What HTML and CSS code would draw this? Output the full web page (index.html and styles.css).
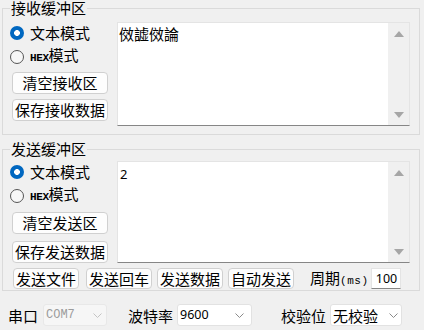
FILE: index.html
```html
<!DOCTYPE html>
<html lang="zh-CN">
<head>
<meta charset="utf-8">
<title>串口助手</title>
<link rel="stylesheet" href="styles.css">
</head>
<body>
<div class="app">
  <fieldset class="group recv">
    <legend>接收缓冲区</legend>
    <div class="group-body">
      <div class="side">
        <div class="radio"><span class="dot on"></span><span>文本模式</span></div>
        <div class="radio"><span class="dot"></span><span><span class="latin">HEX</span>模式</span></div>
        <button class="btn btn-a">清空接收区</button>
        <button class="btn btn-b">保存接收数据</button>
      </div>
      <div class="textbox">
        <div class="text">傚譃傚論</div>
        <div class="scroll"><span class="arr up"></span><span class="arr down"></span></div>
      </div>
    </div>
  </fieldset>
  <fieldset class="group send">
    <legend>发送缓冲区</legend>
    <div class="group-body">
      <div class="side">
        <div class="radio"><span class="dot on"></span><span>文本模式</span></div>
        <div class="radio"><span class="dot"></span><span><span class="latin">HEX</span>模式</span></div>
        <button class="btn btn-a">清空发送区</button>
        <button class="btn btn-b">保存发送数据</button>
      </div>
      <div class="textbox">
        <div class="text num-text">2</div>
        <div class="scroll"><span class="arr up"></span><span class="arr down"></span></div>
      </div>
    </div>
    <div class="actions">
      <button class="btn btn-s btn-first">发送文件</button>
      <button class="btn btn-s">发送回车</button>
      <button class="btn btn-s">发送数据</button>
      <button class="btn btn-s">自动发送</button>
      <span class="period">周期<span class="ms">(ms)</span></span>
      <span class="field">100</span>
    </div>
  </fieldset>
  <div class="status">
    <span class="lbl">串口</span>
    <span class="combo disabled c-port"><span class="mono">COM7</span><svg class="chev" width="9" height="5" viewBox="0 0 9 5"><polyline points="0.5,0.5 4.5,4.5 8.5,0.5"/></svg></span>
    <span class="lbl l-baud">波特率</span>
    <span class="combo c-baud"><span class="digits">9600</span><svg class="chev" width="9" height="5" viewBox="0 0 9 5"><polyline points="0.5,0.5 4.5,4.5 8.5,0.5"/></svg></span>
    <span class="lbl l-parity">校验位</span>
    <span class="combo c-parity"><span>无校验</span><svg class="chev" width="9" height="5" viewBox="0 0 9 5"><polyline points="0.5,0.5 4.5,4.5 8.5,0.5"/></svg></span>
  </div>
</div>
</body>
</html>
```

FILE: styles.css
```css
* { box-sizing: border-box; }
body {
  margin: 0;
  background: #f0f0f0;
  font-family: "Noto Sans CJK SC", "Noto Sans", sans-serif;
  font-size: 15px;
  line-height: 1;
  color: #000;
}
.app {
  width: 420px;
  padding-left: 2px;
}
.group {
  margin: 0;
  padding: 6px 9px 8px 7px;
  border: 1px solid #dadada;
  min-width: 0;
}
.group.send {
  margin-top: 6px;
  padding-top: 4px;
  padding-bottom: 1px;
}
legend {
  padding: 0 1px;
  font-size: 15px;
  line-height: 16px;
}
.group-body {
  display: flex;
}
.side {
  width: 107px;
  display: flex;
  flex-direction: column;
  align-items: flex-start;
}
.radio {
  height: 21px;
  display: flex;
  align-items: center;
  gap: 6px;
  line-height: 21px;
  white-space: nowrap;
}
.radio + .radio { margin-top: 3px; }
.dot {
  width: 14px;
  height: 14px;
  border-radius: 50%;
  border: 1px solid #555;
  background: #f7f7f7;
  flex: none;
}
.dot.on {
  border: none;
  background: radial-gradient(circle, #fff 2.6px, #0067c0 3.2px);
}
.latin {
  font-family: "Liberation Mono", monospace;
  font-weight: bold;
  font-size: 11px;
  letter-spacing: -0.4px;
}
.btn {
  font-family: inherit;
  font-size: 15px;
  line-height: 20px;
  color: #000;
  background: #fdfdfd;
  border: 1px solid #d0d0d0;
  border-radius: 4px;
  padding: 0;
  margin: 0;
  height: 22px;
  width: 96px;
  margin-left: 2px;
  text-align: center;
}
.recv .btn-a { margin-top: 5px; }
.recv .btn-b { margin-top: 5px; }
.send .btn-a { margin-top: 6px; }
.send .btn-b { margin-top: 7px; }
.textbox {
  flex: 1;
  display: flex;
  height: 104px;
  background: #fff;
  border: 1px solid #e4e4e4;
  border-bottom-color: #868686;
}
.send .textbox { height: 102px; }
.text {
  flex: 1;
  padding: 2px 1px;
  line-height: 18px;
}
.num-text {
  font-family: "Noto Sans", sans-serif;
  font-size: 13px;
  padding: 3px 2px;
}
.scroll {
  width: 21px;
  background: #f0f0f0;
  display: flex;
  flex-direction: column;
  justify-content: space-between;
  align-items: center;
  padding: 8px 0 7px;
}
.arr {
  width: 0;
  height: 0;
  border-left: 5px solid transparent;
  border-right: 5px solid transparent;
}
.arr.up { border-bottom: 6px solid #a6a6a6; }
.arr.down { border-top: 6px solid #a6a6a6; }
.actions {
  display: flex;
  align-items: center;
  margin-top: 5px;
  padding-left: 3px;
  gap: 5px;
}
.btn-s {
  width: auto;
  height: 21px;
  line-height: 19px;
  padding: 0 2px;
  margin-left: 0;
}
.btn-first { margin-right: 2px; }
.period {
  margin-left: 11px;
  white-space: nowrap;
}
.ms {
  font-family: "Liberation Mono", monospace;
  font-size: 11px;
  letter-spacing: 0.5px;
}
.field {
  width: 30px;
  height: 21px;
  margin-left: -2px;
  background: #fff;
  border: 1px solid #e4e4e4;
  border-bottom-color: #868686;
  font-family: "Noto Sans", sans-serif;
  font-size: 12.5px;
  line-height: 19px;
  text-align: center;
}
.status {
  display: flex;
  align-items: center;
  height: 22px;
  margin-top: 13px;
  padding-left: 6px;
}
.lbl { white-space: nowrap; }
.combo {
  height: 22px;
  border: 1px solid #e2e2e2;
  border-radius: 3px;
  background: #fff;
  display: flex;
  align-items: center;
  justify-content: space-between;
  padding: 0 5px 0 2px;
  white-space: nowrap;
}
.combo.disabled {
  background: #f6f6f6;
  border-color: #e8e8e8;
  color: #9c9c9c;
}
.c-port { width: 64px; margin-left: 5px; padding-right: 4px; }
.l-baud { margin-left: 21px; }
.c-baud { width: 75px; margin-left: 4px; padding-right: 7px; }
.l-parity { margin-left: 29px; }
.c-parity { width: 72px; margin-left: 4px; padding-right: 3px; }
.mono {
  font-family: "Liberation Mono", monospace;
  font-size: 12px;
}
.digits {
  font-family: "Noto Sans", sans-serif;
  font-size: 12.5px;
}
.chev { flex: none; }
.chev polyline {
  fill: none;
  stroke: #8a8a8a;
  stroke-width: 1;
}
.disabled .chev polyline { stroke: #c4c4c4; }
```
